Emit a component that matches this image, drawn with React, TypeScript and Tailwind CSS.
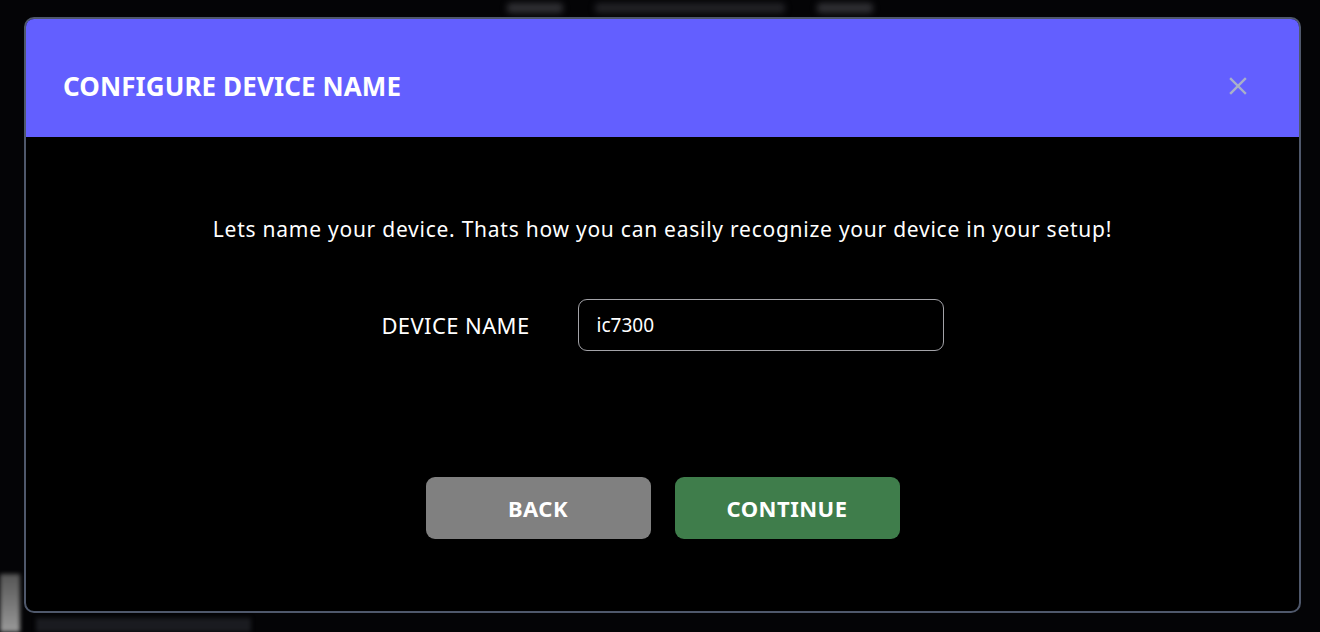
import React, { useState } from 'react';

const font = 'font-["Noto_Sans","Open_Sans",sans-serif]';

// blurred app behind the dialog
const Backdrop: React.FC = () => (
  <div className="h-[632px] w-full bg-[#040406] flex flex-col justify-between">
    <div className="flex h-[16px] items-center justify-center gap-8 pl-[60px] blur-[3px]">
      <span className="h-[10px] w-[56px] rounded bg-[#303034]" />
      <span className="h-[10px] w-[190px] rounded bg-[#222226]" />
      <span className="h-[10px] w-[56px] rounded bg-[#303034]" />
    </div>
    <div className="flex items-end blur-[2px]">
      <span className="h-[58px] w-[20px] bg-gradient-to-b from-[#555] to-[#9a9a9a]" />
      <span className="ml-[16px] h-[14px] w-[215px] bg-[#1a1b20]" />
    </div>
  </div>
);

const CloseIcon: React.FC = () => (
  <svg width="18" height="18" viewBox="0 0 18 18" fill="none" stroke="#a9b0c9" strokeWidth="2.4" strokeLinecap="square">
    <path d="M2 2 L16 16 M16 2 L2 16" />
  </svg>
);

export default function App() {
  const [name, setName] = useState('ic7300');

  return (
    <div className={`relative h-[632px] w-[1320px] overflow-hidden bg-black ${font}`}>
      <Backdrop />

      {/* Dialog */}
      <div className="absolute inset-0 pl-[24px] pr-[19px] pt-[17px] pb-[19px]">
        <div className="flex h-full flex-col overflow-hidden rounded-[10px] border-2 border-[#4f586b] bg-black">
          <div className="flex h-[118px] shrink-0 items-center justify-between bg-[#635fff] pl-[37px] pr-[52px] pt-[16px]">
            <h2 className="text-[26px] font-bold tracking-[0.1px] text-white">CONFIGURE DEVICE NAME</h2>
            <button className="flex items-center justify-center">
              <CloseIcon />
            </button>
          </div>

          <div className="flex flex-1 flex-col items-center pt-[78px]">
            <p className="text-[21px] leading-[28px] tracking-[0.75px] text-white">
              Lets name your device. Thats how you can easily recognize your device in your setup!
            </p>

            <div className="mt-[56px] flex items-center gap-[48px]">
              <label className="text-[22px] tracking-[0.4px] text-white">DEVICE NAME</label>
              <div className="flex h-[52px] w-[366px] items-center rounded-[9px] border border-[#a3a3a8] bg-black pl-[18px] pr-[16px]">
                <input
                  value={name}
                  onChange={(e) => setName(e.target.value)}
                  className="w-full bg-transparent text-[19px] text-white outline-none"
                />
              </div>
            </div>

            <div className="mt-[126px] flex gap-[24px]">
              <button className="h-[62px] w-[225px] rounded-[9px] bg-[#808080] text-[22px] font-bold tracking-[0.5px] text-white">
                BACK
              </button>
              <button className="h-[62px] w-[225px] rounded-[9px] bg-[#3f7d4b] text-[22px] font-bold tracking-[0.5px] text-white">
                CONTINUE
              </button>
            </div>
          </div>
        </div>
      </div>
    </div>
  );
}
